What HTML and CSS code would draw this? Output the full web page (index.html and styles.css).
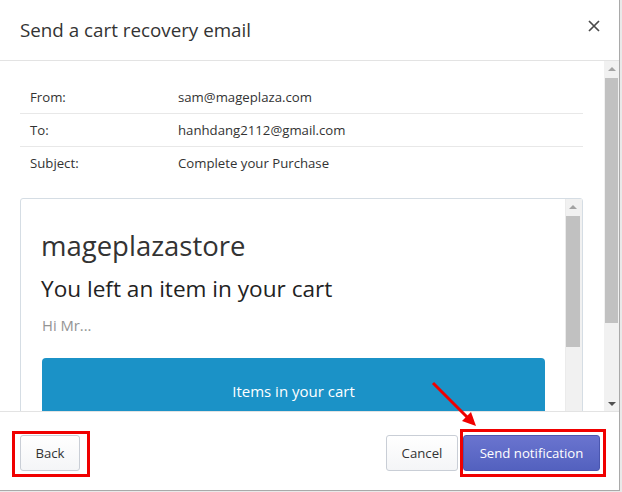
FILE: index.html
```html
<!DOCTYPE html>
<html lang="en">
<head>
<meta charset="utf-8">
<title>Send a cart recovery email</title>
<link rel="stylesheet" href="styles.css">
</head>
<body>
<div class="modal">
  <header class="modal-header">
    <h1 class="modal-title">Send a cart recovery email</h1>
    <button class="close-btn" aria-label="Close">
      <svg width="12" height="12" viewBox="0 0 12 12"><path d="M1 1L11 11M11 1L1 11" stroke="#4a4a4a" stroke-width="1.7" fill="none"/></svg>
    </button>
  </header>

  <div class="modal-body">
    <div class="body-content">
      <div class="meta">
        <div class="meta-row"><span class="meta-label">From:</span><span class="meta-value">sam@mageplaza.com</span></div>
        <div class="meta-row"><span class="meta-label">To:</span><span class="meta-value">hanhdang2112@gmail.com</span></div>
        <div class="meta-row last"><span class="meta-label">Subject:</span><span class="meta-value">Complete your Purchase</span></div>
      </div>

      <div class="preview">
        <div class="preview-content">
          <div class="store">mageplazastore</div>
          <div class="headline">You left an item in your cart</div>
          <div class="greeting">Hi Mr...</div>
          <div class="cart-banner">Items in your cart</div>
        </div>
        <div class="scrollbar scrollbar-inner">
          <div class="sb-arrow up"></div>
          <div class="sb-thumb"></div>
        </div>
      </div>
    </div>

    <div class="scrollbar scrollbar-outer">
      <div class="sb-arrow up"></div>
      <div class="sb-thumb"></div>
      <div class="sb-space"></div>
      <div class="sb-arrow down"></div>
    </div>
  </div>

  <footer class="modal-footer">
    <button class="btn btn-back">Back</button>
    <div class="footer-right">
      <button class="btn btn-cancel">Cancel</button>
      <button class="btn btn-primary">Send notification</button>
    </div>
  </footer>

  <div class="mark mark-back"></div>
  <div class="mark mark-send"></div>
  <svg class="arrow" width="60" height="60" viewBox="0 0 60 60">
    <line x1="4" y1="4" x2="40" y2="40" stroke="#f00000" stroke-width="3"/>
    <polygon points="47,47 33,42 42,33" fill="#f00000"/>
  </svg>
</div>
</body>
</html>
```

FILE: styles.css
```css
* { box-sizing: border-box; }

html, body {
  margin: 0;
  padding: 0;
}

body {
  background: #e9e9e9;
  font-family: "Open Sans", "Noto Sans", sans-serif;
  color: #333;
}

.modal {
  position: relative;
  width: 620px;
  height: 491px;
  background: #fff;
  border-right: 1px solid #a9a9a9;
  border-bottom: 1px solid #a9a9a9;
  display: flex;
  flex-direction: column;
}

.modal-header {
  height: 61px;
  flex: none;
  border-bottom: 1px solid #e3e3e3;
  display: flex;
  align-items: center;
  justify-content: space-between;
  padding: 0 19px 0 20px;
}

.modal-title {
  margin: 0;
  font-size: 18.8px;
  font-weight: 400;
  color: #333;
}

.close-btn {
  border: 0;
  background: none;
  padding: 0;
  width: 12px;
  height: 12px;
  display: flex;
  position: relative;
  top: -4px;
}

.modal-body {
  height: 351px;
  flex: none;
  display: flex;
  border-bottom: 1px solid #e3e3e3;
  overflow: hidden;
}

.body-content {
  flex: 1;
  padding: 20px 21px 0 20px;
  overflow: hidden;
}

.meta {
  font-size: 13.2px;
  color: #333;
}

.meta-row {
  display: flex;
  align-items: center;
  height: 33px;
  border-bottom: 1px solid #e8e8e8;
  padding-left: 10px;
}

.meta-row.last {
  border-bottom: 0;
  height: 32px;
}

.meta-label {
  width: 148px;
  flex: none;
}

.preview {
  margin-top: 19px;
  height: 320px;
  border: 1px solid #d5dde4;
  border-radius: 3px;
  display: flex;
}

.preview-content {
  flex: 1;
  padding: 30px 20px 0 21px;
}

.store {
  font-size: 27.5px;
  line-height: 34px;
  color: #333;
  margin-left: -1px;
}

.headline {
  font-size: 22.6px;
  line-height: 30px;
  margin-top: 11px;
  color: #222;
  margin-left: -1px;
}

.greeting {
  font-size: 14.8px;
  line-height: 20px;
  color: #949494;
  margin-top: 11px;
}

.cart-banner {
  margin-top: 23px;
  height: 90px;
  background: #1b92c7;
  border-radius: 4px 4px 0 0;
  color: #fff;
  font-size: 15px;
  text-align: center;
  padding-top: 22px;
  line-height: 22px;
}

.scrollbar {
  flex: none;
  background: #f1f1f1;
  display: flex;
  flex-direction: column;
  align-items: center;
}

.scrollbar-inner {
  width: 17px;
  padding-right: 2px;
  border-left: 1px solid #ebebeb;
}

.scrollbar-inner .sb-thumb {
  width: 14px;
  height: 131px;
  margin-top: 2px;
}

.scrollbar-outer {
  width: 15px;
}

.scrollbar-outer .sb-thumb {
  width: 13px;
  height: 245px;
  margin-top: 2px;
}

.sb-space { flex: 1; }

.sb-thumb {
  background: #c1c1c1;
}

.sb-arrow {
  height: 15px;
  width: 100%;
  position: relative;
}

.sb-arrow::after {
  content: "";
  position: absolute;
  left: 50%;
  top: 50%;
  transform: translate(-50%, -50%);
  border-left: 4px solid transparent;
  border-right: 4px solid transparent;
}

.sb-arrow.up::after {
  border-bottom: 4px solid #a3a3a3;
}

.sb-arrow.down::after {
  border-top: 4px solid #505050;
}

.modal-footer {
  flex: 1;
  display: flex;
  justify-content: space-between;
  align-items: flex-start;
  padding: 23px 19px 0 20px;
}

.footer-right {
  display: flex;
  gap: 5px;
}

.btn {
  height: 36px;
  padding: 0;
  font-family: "Open Sans", "Noto Sans", sans-serif;
  font-size: 13.2px;
  color: #333;
  background: linear-gradient(#ffffff, #f4f5f7);
  border: 1px solid #c9ced6;
  border-radius: 3px;
  text-align: center;
}

.btn-back { width: 60px; }
.btn-cancel { width: 72px; }

.btn-primary {
  width: 137px;
  color: #fff;
  background: linear-gradient(#6a74cf, #5361bf);
  border-color: #4a56af;
}

.mark {
  position: absolute;
  border: 3px solid #f00000;
}

.mark-back {
  left: 12px;
  top: 431px;
  width: 78px;
  height: 46px;
}

.mark-send {
  left: 460px;
  top: 429px;
  width: 146px;
  height: 48px;
}

.arrow {
  position: absolute;
  left: 429px;
  top: 379px;
}
```
